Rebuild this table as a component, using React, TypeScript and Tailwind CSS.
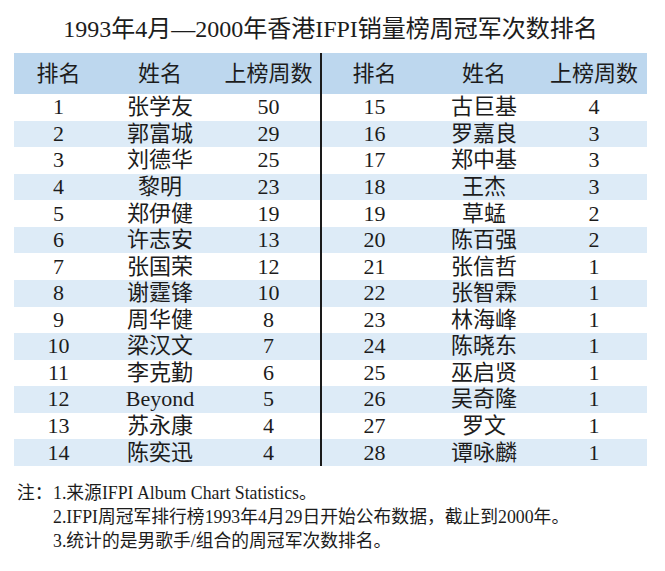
import React from "react";

type Row = [string, string, string];

const left: Row[] = [
  ["1", "张学友", "50"],
  ["2", "郭富城", "29"],
  ["3", "刘德华", "25"],
  ["4", "黎明", "23"],
  ["5", "郑伊健", "19"],
  ["6", "许志安", "13"],
  ["7", "张国荣", "12"],
  ["8", "谢霆锋", "10"],
  ["9", "周华健", "8"],
  ["10", "梁汉文", "7"],
  ["11", "李克勤", "6"],
  ["12", "Beyond", "5"],
  ["13", "苏永康", "4"],
  ["14", "陈奕迅", "4"],
];

const right: Row[] = [
  ["15", "古巨基", "4"],
  ["16", "罗嘉良", "3"],
  ["17", "郑中基", "3"],
  ["18", "王杰", "3"],
  ["19", "草蜢", "2"],
  ["20", "陈百强", "2"],
  ["21", "张信哲", "1"],
  ["22", "张智霖", "1"],
  ["23", "林海峰", "1"],
  ["24", "陈晓东", "1"],
  ["25", "巫启贤", "1"],
  ["26", "吴奇隆", "1"],
  ["27", "罗文", "1"],
  ["28", "谭咏麟", "1"],
];

function Half({ rows, widths }: { rows: Row[]; widths: [string, string, string] }) {
  return (
    <div className="flex flex-col">
      <div className="flex h-[41px] items-center bg-[#bdd7ee]">
        <div className={`${widths[0]} text-center`}>排名</div>
        <div className={`${widths[1]} text-center`}>姓名</div>
        <div className={`${widths[2]} text-center`}>上榜周数</div>
      </div>
      {rows.map((r, i) => (
        <div
          key={r[0]}
          className={`flex h-[26.57px] items-center ${i % 2 === 1 ? "bg-[#ddebf7]" : "bg-white"}`}
        >
          <div className={`${widths[0]} text-center`}>{r[0]}</div>
          <div className={`${widths[1]} text-center`}>{r[1]}</div>
          <div className={`${widths[2]} text-center`}>{r[2]}</div>
        </div>
      ))}
    </div>
  );
}

export default function App() {
  return (
    <div className="w-[665px] h-[571px] bg-white text-[#1c1c1c] font-['Liberation_Serif','Noto_Sans_CJK_SC',serif] overflow-hidden">
      <div className="h-[53px] pt-[5px] flex items-center justify-center text-[24px] leading-none pr-[4px]">
        1993年4月—2000年香港IFPI销量榜周冠军次数排名
      </div>
      <div className="ml-[14px] flex w-[633px] text-[22px] leading-none">
        <div className="w-[306px]">
          <Half rows={left} widths={["w-[89px]", "w-[114px]", "w-[103px]"]} />
        </div>
        <div className="w-[2px] bg-[#1a1a1a]" />
        <div className="w-[325px]">
          <Half rows={right} widths={["w-[105px]", "w-[114px]", "w-[106px]"]} />
        </div>
      </div>
      <div className="mt-[15px] pl-[17px] flex text-[17.8px] leading-[24px]">
        <div className="w-[36px] shrink-0">注：</div>
        <div className="flex flex-col">
          <div>1.来源IFPI Album Chart Statistics。</div>
          <div>2.IFPI周冠军排行榜1993年4月29日开始公布数据，截止到2000年。</div>
          <div>3.统计的是男歌手/组合的周冠军次数排名。</div>
        </div>
      </div>
    </div>
  );
}
